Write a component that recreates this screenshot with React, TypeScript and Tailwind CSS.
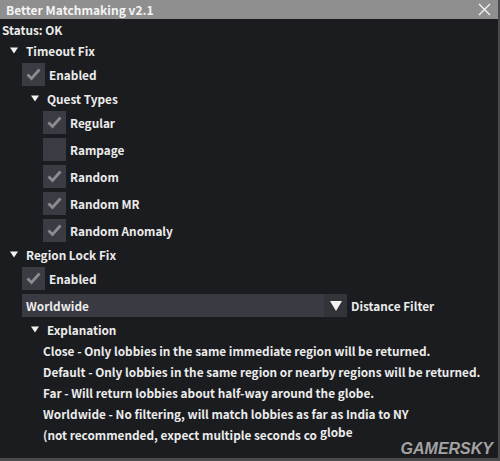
import React from 'react';

const font = { fontFamily: '"Noto Sans CJK SC", "Noto Sans", sans-serif' };

const Arrow: React.FC<{ size?: 'sm' | 'lg' }> = ({ size = 'sm' }) =>
  size === 'sm' ? (
    <svg width="8" height="7" viewBox="0 0 8 7" className="shrink-0">
      <path d="M0 0.5 H8 L4 6.5 Z" fill="#f2f2f2" />
    </svg>
  ) : (
    <svg width="12" height="10" viewBox="0 0 12 10" className="shrink-0">
      <path d="M0 0 H12 L6 10 Z" fill="#f4f4f4" />
    </svg>
  );

const TreeNode: React.FC<{ label: string; indent: number }> = ({ label, indent }) => (
  <div className="flex items-center h-[17px]" style={{ paddingLeft: indent }}>
    <div className="w-[24px] flex items-center pl-[8px]">
      <Arrow />
    </div>
    <span>{label}</span>
  </div>
);

const Checkbox: React.FC<{ label: string; checked: boolean; indent: number }> = ({ label, checked, indent }) => (
  <div className="flex items-center h-[23px]" style={{ paddingLeft: indent }}>
    <div className="w-[23px] h-[23px] bg-[#3b3b43] flex items-center justify-center shrink-0">
      {checked && (
        <svg width="17" height="17" viewBox="0 0 17 17">
          <path d="M2.5 8.5 L6.5 12.5 L14.5 3.5" fill="none" stroke="#8c8c90" strokeWidth="2.8" />
        </svg>
      )}
    </div>
    <span className="ml-[4px]">{label}</span>
  </div>
);

const App: React.FC = () => {
  const questTypes = [
    { label: 'Regular', checked: true },
    { label: 'Rampage', checked: false },
    { label: 'Random', checked: true },
    { label: 'Random MR', checked: true },
    { label: 'Random Anomaly', checked: true },
  ];

  const explanation = [
    'Close - Only lobbies in the same immediate region will be returned.',
    'Default - Only lobbies in the same region or nearby regions will be returned.',
    'Far - Will return lobbies about half-way around the globe.',
    'Worldwide - No filtering, will match lobbies as far as India to NY',
  ];

  return (
    <div className="w-[500px] h-[461px] bg-[#4a4a4c] overflow-hidden" style={font}>
      <div className="relative w-[498px] h-[458px] bg-[#1b1c1f] text-[11.8px] font-bold text-[#ececec] leading-[17px]">
        {/* Title bar */}
        <div className="h-[19px] bg-[#8f8f8f] flex items-center justify-between pl-[6px] pr-[7px]">
          <span className="text-[12px] text-[#f4f4f4]">Better Matchmaking v2.1</span>
          <svg width="13" height="13" viewBox="0 0 13 13">
            <path d="M1 1 L12 12 M12 1 L1 12" stroke="#f4f4f4" strokeWidth="1.3" />
          </svg>
        </div>

        {/* Content */}
        <div className="flex flex-col gap-[4px] pt-[2px]">
          <div className="h-[17px] pl-[2px]">Status: OK</div>

          <TreeNode label="Timeout Fix" indent={2} />
          <Checkbox label="Enabled" checked indent={22} />
          <TreeNode label="Quest Types" indent={23} />
          {questTypes.map((q) => (
            <Checkbox key={q.label} label={q.label} checked={q.checked} indent={43} />
          ))}

          <TreeNode label="Region Lock Fix" indent={2} />
          <Checkbox label="Enabled" checked indent={22} />

          <div className="flex items-center h-[23px] pl-[22px]">
            <div className="w-[325px] h-[23px] bg-[#3a3a42] flex items-center">
              <span className="flex-1 pl-[4px]">Worldwide</span>
              <div className="w-[23px] h-[23px] bg-[#33333a] flex items-center justify-center">
                <Arrow size="lg" />
              </div>
            </div>
            <span className="ml-[4px]">Distance Filter</span>
          </div>

          <TreeNode label="Explanation" indent={23} />
          {explanation.map((line) => (
            <div key={line} className="h-[17px] pl-[43px] whitespace-nowrap">
              {line}
            </div>
          ))}
          <div className="h-[17px] pl-[43px] whitespace-nowrap">
            (not recommended, expect multiple seconds co
            <span className="relative -top-[3px] ml-[3px]">globe</span>
          </div>
        </div>

        {/* watermark */}
        <div
          className="absolute right-[5px] bottom-[1px] text-[16px] font-black italic text-[#a3a3a3]"
          style={{ fontFamily: '"Liberation Sans", Arial, sans-serif' }}
        >
          GAMERSKY
        </div>
      </div>
    </div>
  );
};

export default App;
